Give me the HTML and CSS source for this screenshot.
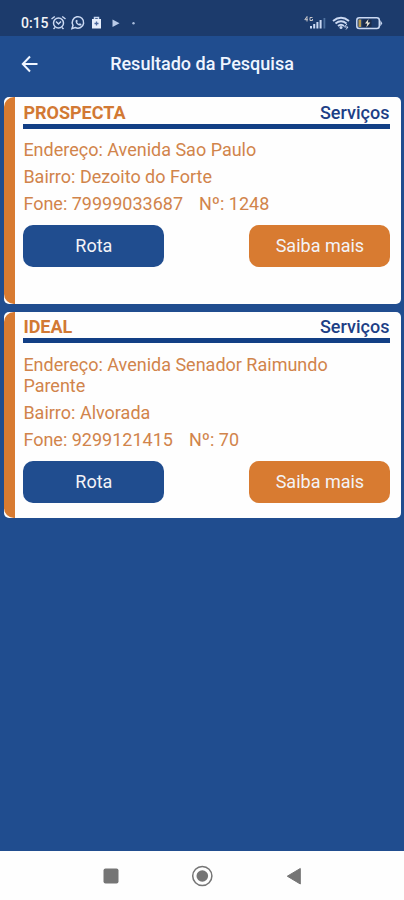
FILE: index.html
```html
<!DOCTYPE html>
<html lang="pt-BR">
<head>
<meta charset="utf-8">
<title>Resultado da Pesquisa</title>
<link rel="stylesheet" href="styles.css">
</head>
<body>
<div class="status">
  <span class="time">0:15</span>
  <svg class="status-left" width="88" height="18" viewBox="0 0 88 18" fill="none" stroke="#cbd9f2" stroke-width="1.5">
    <circle cx="8.5" cy="10" r="5"/><path d="M1.500 6 4.800 3.500M12.200 3.500l3.300 2.500M5 14.500l-1.500 1.500M12 14.500l1.500 1.500M6 8.500l2.500 2.500L11 8.500"/>
    <path d="M22 15.500l1-3.200a5.700 5.700 0 1 1 2.300 2.200Z"/><path d="M25.700 7.200c-.8 3 2.600 6.200 5.500 5.100l.3-1.400-1.700-.7-.9.8c-.9-.4-1.600-1.100-1.900-1.900l.8-.9-.7-1.500Z" fill="#cbd9f2" stroke="none"/>
    <path d="M42 6h9v9.500h-9Z" fill="#e6edfa" stroke="none"/><path d="M44.500 6V4.500h4V6"/><path d="M46.500 8.500v4M44.500 10.500h4" stroke="#4b689d" stroke-width="1.300"/>
    <path d="M62.500 6.500v7.500l7-3.700Z" fill="#b9cbe8" stroke="none"/><circle cx="83.500" cy="10.300" r="1.200" fill="#a9bddc" stroke="none"/>
  </svg>
  <svg class="status-right" width="80" height="18" viewBox="0 0 80 18" fill="#cbd9f2">
    <path d="M3 3.500 .8 6.700h3M3 3.500v5M8.500 4.500H6v3h2.500V6" fill="none" stroke="#c6c5c9"/>
    <path d="M6 13h2v2.500H6ZM9.200 11h2v4.500h-2ZM12.400 9h2v6.500h-2ZM15.600 7h2v8.500h-2Z"/><path d="M19.500 5h1.800v10.500h-1.800Z" fill="#4d719f"/>
    <path d="M29 8q8-6.500 16 0M31.500 10.500q5.500-4.500 11 0M34 12.900q3-2.500 6 0" fill="none" stroke="#cbd9f2" stroke-width="1.900"/><circle cx="37" cy="14.500" r="1.500"/><path d="m43 11-2.500 3H44l-2 2.500" fill="none" stroke="#cbd9f2"/>
    <rect x="52.800" y="4.800" width="22.500" height="10.800" rx="2.500" fill="none" stroke="#cbd9f2" stroke-width="1.500"/><path d="M76.300 7v6.500l2-3.200Z"/>
    <path d="M54.500 6.500h2.700v7.500h-2.700Z" fill="#b79b54"/><path d="M58.500 6.500h9v7.500h-9Z" fill="#1b2c4b"/><path d="m64.500 6-3.500 4.500h2.300L62.300 14.500l4-5.100h-2.500Z" fill="#eee9d8"/>
  </svg>
</div>
<header class="appbar">
  <svg class="back" width="18" height="18" viewBox="0 0 18 18" fill="none" stroke="#eff5ff" stroke-width="2"><path d="M16.500 9H2M9 1.500 1.800 9 9 16.500"/></svg>
  <h1>Resultado da Pesquisa</h1>
</header>
<main class="results">
  <article class="card">
    <div class="stripe"></div>
    <div class="content">
      <div class="heading"><h2>PROSPECTA</h2><strong>Serviços</strong></div>
      <p>Endereço: Avenida Sao Paulo</p>
      <p>Bairro: Dezoito do Forte</p>
      <p class="contact"><span>Fone: 79999033687</span><span>Nº: 1248</span></p>
      <div class="actions"><button class="btn route">Rota</button><button class="btn more">Saiba mais</button></div>
    </div>
  </article>
  <article class="card">
    <div class="stripe"></div>
    <div class="content">
      <div class="heading"><h2>IDEAL</h2><strong>Serviços</strong></div>
      <p>Endereço: Avenida Senador Raimundo Parente</p>
      <p>Bairro: Alvorada</p>
      <p class="contact"><span>Fone: 9299121415</span><span>Nº: 70</span></p>
      <div class="actions"><button class="btn route">Rota</button><button class="btn more">Saiba mais</button></div>
    </div>
  </article>
</main>
<nav class="navbar">
  <svg width="22" height="22" viewBox="0 0 22 22"><rect x="3.500" y="3.500" width="15" height="15" rx="2" fill="#757575"/></svg>
  <svg width="22" height="22" viewBox="0 0 22 22"><circle cx="11.300" cy="11" r="9.600" fill="none" stroke="#757575" stroke-width="1.500"/><circle cx="11.300" cy="11" r="5.800" fill="#757575"/></svg>
  <svg width="22" height="22" viewBox="0 0 22 22"><path d="M17.300 3.500v15.500L4.300 11.200Z" fill="#757575" stroke="#757575" stroke-linejoin="round"/></svg>
</nav>
</body>
</html>
```
FILE: styles.css
```css
* { box-sizing: border-box; }
body {
  margin: 0;
  height: 900px;
  display: flex;
  flex-direction: column;
  overflow: hidden;
  background: #204d8f;
  font-family: Roboto, sans-serif;
}
h1, h2, p { margin: 0; }
svg { display: block; flex: none; }
.status {
  height: 36px;
  display: flex;
  align-items: flex-end;
  padding: 0 20px 4px 21px;
  background: #1c3b6c;
}
.time { width: 29px; color: #f2f3f7; font-size: 14px; font-weight: 500; line-height: 17px; white-space: nowrap; }
.status-left, .status-right { margin-bottom: 1px; }
.status-right { margin-left: auto; }
.appbar {
  height: 56px;
  display: grid;
  grid-template-columns: 21px 1fr 21px;
  align-items: center;
  flex: none;
}
.back { grid-column: 1; margin-left: 21px; }
.appbar h1 { grid-column: 2; text-align: center; color: #eff5ff; font-size: 18px; font-weight: 500; line-height: 24px; white-space: nowrap; }
.results { flex: 1; display: flex; flex-direction: column; gap: 8px; padding: 5px 3px 0 4px; }
.card {
  height: 207px;
  display: flex;
  border-radius: 5px;
  overflow: hidden;
  background: #fefefe;
  color: #d1844b;
}
.card + .card { height: 206px; }
.stripe { width: 10.500px; flex: none; border-radius: 10px 0 0 10px; background: #d87b31; }
.content { flex: 1; padding: 6px 10.600px 0 8.900px; }
.heading {
  height: 26px;
  display: flex;
  justify-content: space-between;
  border-bottom: 5px solid #123f85;
  margin: 0 0 9.500px;
  font-size: 18px;
  line-height: 20px;
}
.card + .card .heading { margin-bottom: 10.500px; }
.card + .card .content { padding-top: 5px; }
.heading h2 { color: #d27934; font-size: inherit; font-weight: 700; }
.heading strong { margin-right: 1px; color: #1d3f86; font-weight: 500; }
.card p { font-size: 18px; line-height: 21.500px; margin-bottom: 5.500px; }
.card .contact { display: flex; gap: 16px; margin-bottom: 10.500px; }
.actions { display: flex; justify-content: space-between; }
.btn { width: 141px; height: 42px; border: 0; border-radius: 10px; padding: 0; color: #f3f3f7; font: 400 18px/42px Roboto, sans-serif; }
.route { background: #204d8f; }
.more { background: #d87b31; }
.navbar {
  height: 49px;
  flex: none;
  display: flex;
  justify-content: center;
  align-items: center;
  gap: 69.500px;
  background: #fefefe;
}
```
